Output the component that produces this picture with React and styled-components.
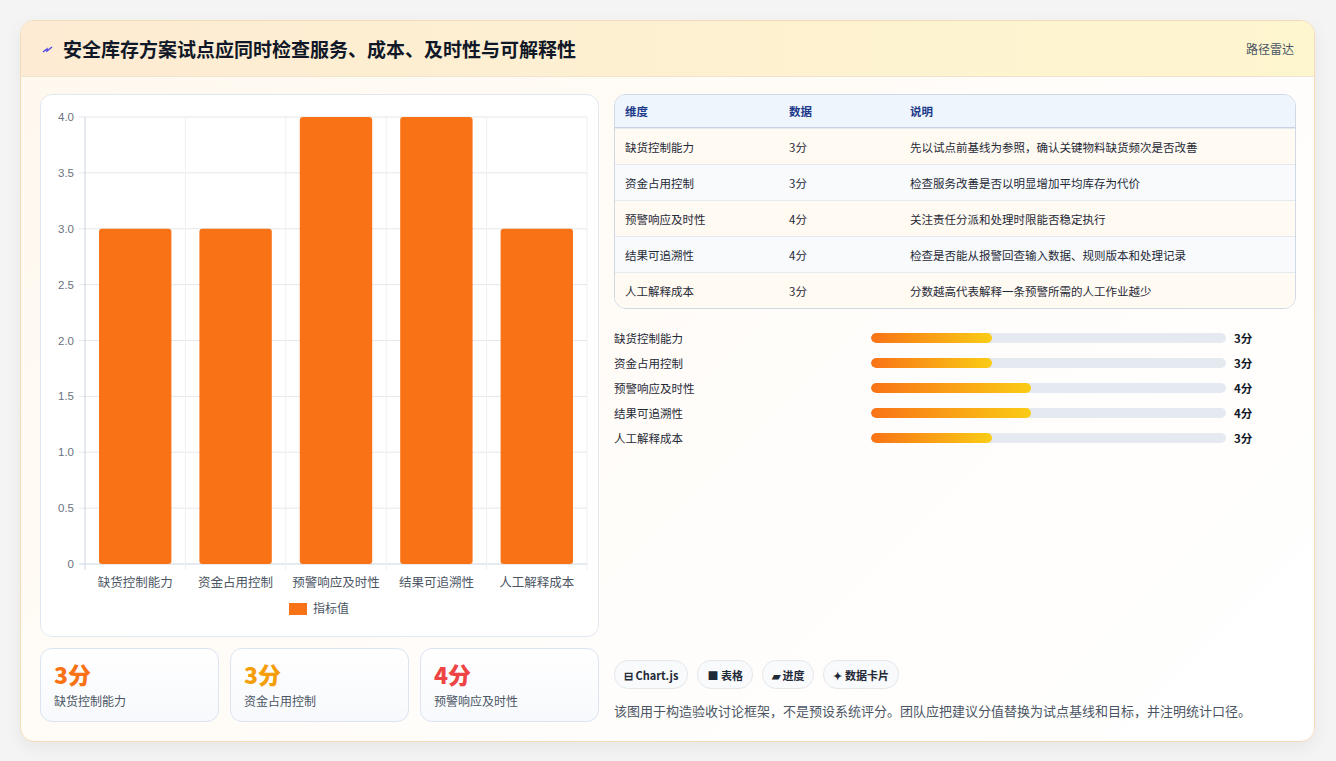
import React from "react";
import styled, { createGlobalStyle } from "styled-components";

const Global = createGlobalStyle`
  body {
    margin: 0;
    background: #f3f4f6;
    font-family: "Noto Sans CJK SC", "Noto Sans", sans-serif;
  }
`;

const Page = styled.div`
  width: 1336px;
  height: 761px;
  padding: 20px 21px 21px 20px;
  box-sizing: border-box;
  background: #f4f4f5;
`;

const Card = styled.div`
  height: 100%;
  border: 1px solid #f5dcb8;
  border-radius: 14px;
  background: linear-gradient(135deg, #fff8ee, #fffdfb 60%, #ffffff);
  box-shadow: 0 6px 18px rgba(0, 0, 0, 0.06);
  display: flex;
  flex-direction: column;
  overflow: hidden;
`;

const Header = styled.div`
  height: 55px;
  flex-shrink: 0;
  display: flex;
  align-items: center;
  justify-content: space-between;
  padding: 0 20px 0 20px;
  background: linear-gradient(90deg, #fdebd3, #fef6cf);
  border-bottom: 1px solid #f1e4cc;
`;

const Title = styled.h1`
  margin: 0;
  font-size: 19px;
  font-weight: 700;
  color: #111827;
  display: flex;
  align-items: center;
  gap: 8px;
`;

const HeaderLink = styled.span`
  font-size: 12px;
  color: #4b5563;
`;

const Body = styled.div`
  flex: 1;
  display: grid;
  grid-template-columns: 559px 1fr;
  gap: 15px;
  padding: 17px 18px 18px 19px;
`;

const Col = styled.div`
  display: flex;
  flex-direction: column;
  gap: 11px;
`;

const Panel = styled.div`
  height: 543px;
  border: 1px solid #e2e8f0;
  border-radius: 12px;
  background: #fff;
  box-sizing: border-box;
`;

const Stats = styled.div`
  display: grid;
  grid-template-columns: repeat(3, 1fr);
  gap: 11px;
`;

const Stat = styled.div`
  height: 74px;
  border: 1px solid #dbe4f0;
  border-radius: 12px;
  background: linear-gradient(180deg, #ffffff, #f7f9fc);
  padding: 11px 13px;
  box-sizing: border-box;
`;

const StatValue = styled.div`
  font-size: 23px;
  font-weight: 800;
  line-height: 28px;
  color: ${(p) => p.color};
`;

const StatLabel = styled.div`
  font-size: 12px;
  color: #4b5563;
  margin-top: 4px;
`;

const Table = styled.div`
  border: 1px solid #cfd9e6;
  border-radius: 12px;
  overflow: hidden;
  background: #fff;
`;

const Row = styled.div`
  display: grid;
  grid-template-columns: 164px 121px 1fr;
  height: 35px;
  align-items: center;
  padding-left: 10px;
  font-size: 11.5px;
  color: #1f2937;
  border-top: 1px solid #e5eaf1;
  background: ${(p) => (p.$head ? "#eef5fd" : p.$odd ? "#fffaf2" : "#f8fafc")};
  ${(p) => p.$head && "color:#1e3a8a;font-weight:700;height:32px;border-top:none;border-bottom:1px solid #c7d3e3;"}
`;

const Bars = styled.div`
  display: flex;
  flex-direction: column;
  gap: 7px;
  margin-top: 9px;
`;

const BarRow = styled.div`
  display: grid;
  grid-template-columns: 257px 355px 1fr;
  align-items: center;
  height: 18px;
  font-size: 11.5px;
  color: #1f2937;
`;

const Track = styled.div`
  height: 10px;
  border-radius: 5px;
  background: #e5e9f0;
  overflow: hidden;
`;

const Fill = styled.div`
  height: 100%;
  border-radius: 5px;
  background: linear-gradient(90deg, #f97316, #facc15);
`;

const BarValue = styled.span`
  padding-left: 8px;
  font-weight: 700;
  color: #111827;
`;

const Footer = styled.div`
  margin-top: auto;
  display: flex;
  flex-direction: column;
  gap: 12px;
  padding-bottom: 3px;
`;

const Chips = styled.div`
  display: flex;
  gap: 9px;
`;

const Chip = styled.span`
  height: 27px;
  padding: 0 9px;
  border: 1px solid #e5e7eb;
  border-radius: 14px;
  background: #f9fafb;
  display: flex;
  align-items: center;
  gap: 4px;
  font-size: 11px;
  font-weight: 700;
  color: #1f2937;
`;

const Note = styled.p`
  margin: 0;
  font-size: 13px;
  color: #4b5563;
`;

const rows = [
  ["缺货控制能力", 3, "先以试点前基线为参照，确认关键物料缺货频次是否改善"],
  ["资金占用控制", 3, "检查服务改善是否以明显增加平均库存为代价"],
  ["预警响应及时性", 4, "关注责任分派和处理时限能否稳定执行"],
  ["结果可追溯性", 4, "检查是否能从报警回查输入数据、规则版本和处理记录"],
  ["人工解释成本", 3, "分数越高代表解释一条预警所需的人工作业越少"],
];

function Chart() {
  const x0 = 44, x1 = 546, y0 = 22, y1 = 469;
  const ticks = [0, 0.5, 1, 1.5, 2, 2.5, 3, 3.5, 4];
  const cw = (x1 - x0) / 5;
  const yOf = (v) => y1 - (v / 4) * (y1 - y0);
  return (
    <svg width="557" height="541" style={{ display: "block" }}>
      {ticks.map((t) => (
        <g key={t}>
          <line x1={x0 - 6} x2={x1} y1={yOf(t)} y2={yOf(t)} stroke={t === 0 ? "#cbd5e1" : "#e5e7eb"} />
          <text x={x0 - 11} y={yOf(t) + 4} textAnchor="end" fontSize="11.5" fill="#6b7280" fontFamily="Liberation Sans, sans-serif">
            {t === 0 ? "0" : t.toFixed(1)}
          </text>
        </g>
      ))}
      {[0, 1, 2, 3, 4, 5].map((i) => (
        <line key={i} x1={x0 + i * cw} x2={x0 + i * cw} y1={y0} y2={y1 + 6} stroke={i === 0 ? "#cbd5e1" : "#eef0f3"} />
      ))}
      {rows.map(([name, v], i) => (
        <g key={name}>
          <rect x={x0 + i * cw + 14} y={yOf(v)} width={cw - 28} height={y1 - yOf(v)} rx="3" fill="#f97316" />
          <text x={x0 + i * cw + cw / 2} y={y1 + 23} textAnchor="middle" fontSize="12.5" fill="#4b5563">{name}</text>
        </g>
      ))}
      <rect x="248" y="508" width="18" height="12" fill="#f97316" />
      <text x="272" y="518" fontSize="12" fill="#4b5563">指标值</text>
    </svg>
  );
}

export default function App() {
  return (
    <Page>
      <Global />
      <Card>
        <Header>
          <Title>
            <svg width="14" height="14" viewBox="0 0 14 14">
              <path d="M2 10 L6 7 L6 9 L11 5" stroke="#4f46e5" strokeWidth="1.4" fill="none" />
            </svg>
            安全库存方案试点应同时检查服务、成本、及时性与可解释性
          </Title>
          <HeaderLink>路径雷达</HeaderLink>
        </Header>
        <Body>
          <Col>
            <Panel><Chart /></Panel>
            <Stats>
              <Stat><StatValue color="#f97316">3分</StatValue><StatLabel>缺货控制能力</StatLabel></Stat>
              <Stat><StatValue color="#f59e0b">3分</StatValue><StatLabel>资金占用控制</StatLabel></Stat>
              <Stat><StatValue color="#ef4444">4分</StatValue><StatLabel>预警响应及时性</StatLabel></Stat>
            </Stats>
          </Col>
          <Col>
            <Table>
              <Row $head><span>维度</span><span>数据</span><span>说明</span></Row>
              {rows.map(([n, v, d], i) => (
                <Row key={n} $odd={i % 2 === 0}><span>{n}</span><span>{v}分</span><span>{d}</span></Row>
              ))}
            </Table>
            <Bars>
              {rows.map(([n, v]) => (
                <BarRow key={n}>
                  <span>{n}</span>
                  <Track><Fill style={{ width: v === 4 ? "45%" : "34%" }} /></Track>
                  <BarValue>{v}分</BarValue>
                </BarRow>
              ))}
            </Bars>
            <Footer>
              <Chips>
                <Chip>⊟ Chart.js</Chip>
                <Chip>■ 表格</Chip>
                <Chip>▰ 进度</Chip>
                <Chip>✦ 数据卡片</Chip>
              </Chips>
              <Note>该图用于构造验收讨论框架，不是预设系统评分。团队应把建议分值替换为试点基线和目标，并注明统计口径。</Note>
            </Footer>
          </Col>
        </Body>
      </Card>
    </Page>
  );
}
